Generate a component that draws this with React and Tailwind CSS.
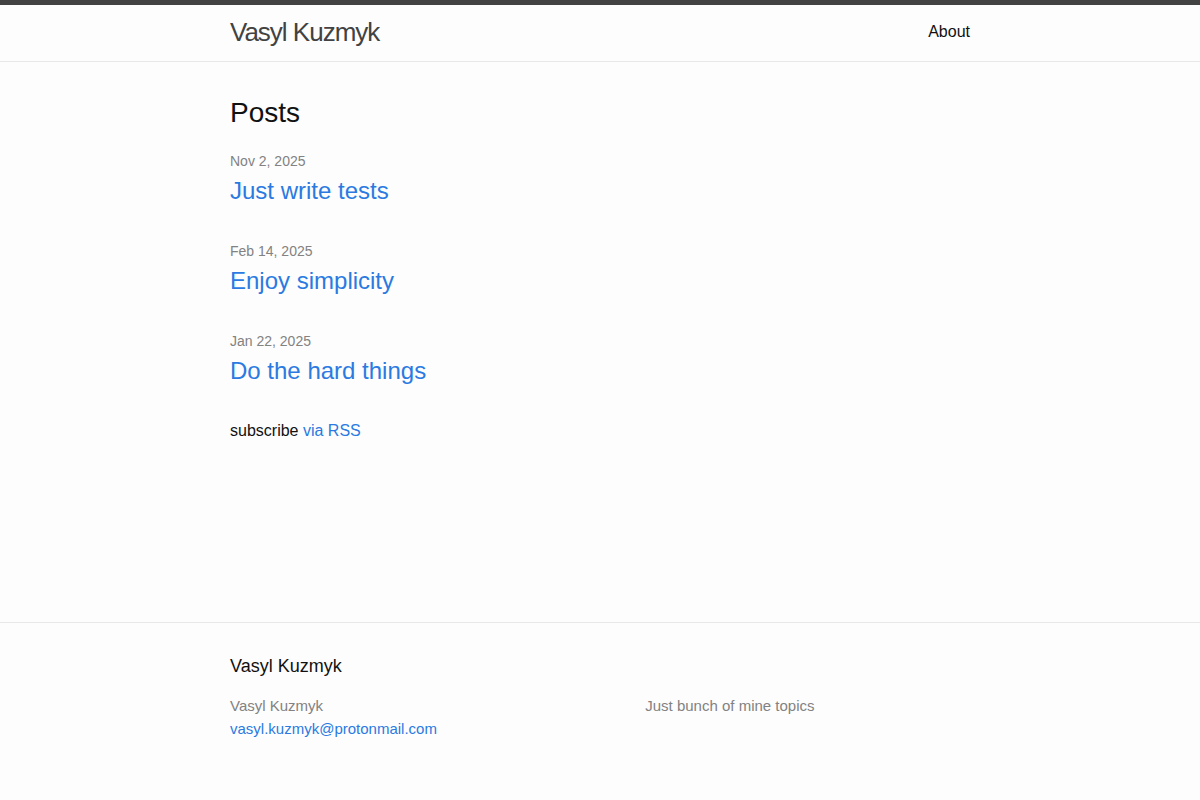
const posts = [
  { date: 'Nov 2, 2025', title: 'Just write tests' },
  { date: 'Feb 14, 2025', title: 'Enjoy simplicity' },
  { date: 'Jan 22, 2025', title: 'Do the hard things' },
];

export default function App() {
  return (
    <div className="min-h-screen flex flex-col bg-[#fdfdfd] text-[#111] text-[16px] leading-[24px] font-['Liberation_Sans',Arial,sans-serif]">
      <header className="border-t-[5px] border-t-[#424242] border-b border-b-[#e8e8e8]">
        <div className="max-w-[800px] mx-auto px-[30px] h-[56px] flex items-start justify-between">
          <a href="#" className="text-[26px] leading-[54px] tracking-[-1px] text-[#424242]">
            Vasyl Kuzmyk
          </a>
          <nav>
            <a href="#" className="text-[#111] leading-[54px]">About</a>
          </nav>
        </div>
      </header>

      <main className="flex-1 py-[30px]">
        <div className="max-w-[800px] mx-auto px-[30px]">
          <h2 className="text-[28px] leading-[42px] mb-[17px]">Posts</h2>
          <ul>
            {posts.map((p, i) => (
              <li key={p.title} className={i === posts.length - 1 ? 'mb-[30px]' : 'mb-[32px]'}>
                <span className="block text-[14px] leading-[21px] text-[#828282]">{p.date}</span>
                <h3 className="text-[24px] leading-[37px]">
                  <a href="#" className="text-[#2a7ae2]">{p.title}</a>
                </h3>
              </li>
            ))}
          </ul>
          <p>
            subscribe <a href="#" className="text-[#2a7ae2]">via RSS</a>
          </p>
        </div>
      </main>

      <footer className="border-t border-t-[#e8e8e8] pt-[30px] pb-[60px]">
        <div className="max-w-[800px] mx-auto px-[30px]">
          <h2 className="text-[18px] leading-[27px] mb-[15px]">Vasyl Kuzmyk</h2>
          <div className="flex text-[15px] leading-[22.5px] text-[#828282] -ml-[15px]">
            <div className="w-[calc(35%-15px)] pl-[15px] box-content">
              <ul>
                <li>Vasyl Kuzmyk</li>
                <li>
                  <a href="#" className="text-[#2a7ae2]">vasyl.kuzmyk@protonmail.com</a>
                </li>
              </ul>
            </div>
            <div className="w-[calc(20%-15px)] pl-[15px] box-content"></div>
            <div className="w-[calc(45%-15px)] pl-[15px] box-content">
              <p>Just bunch of mine topics</p>
            </div>
          </div>
        </div>
      </footer>
    </div>
  );
}
